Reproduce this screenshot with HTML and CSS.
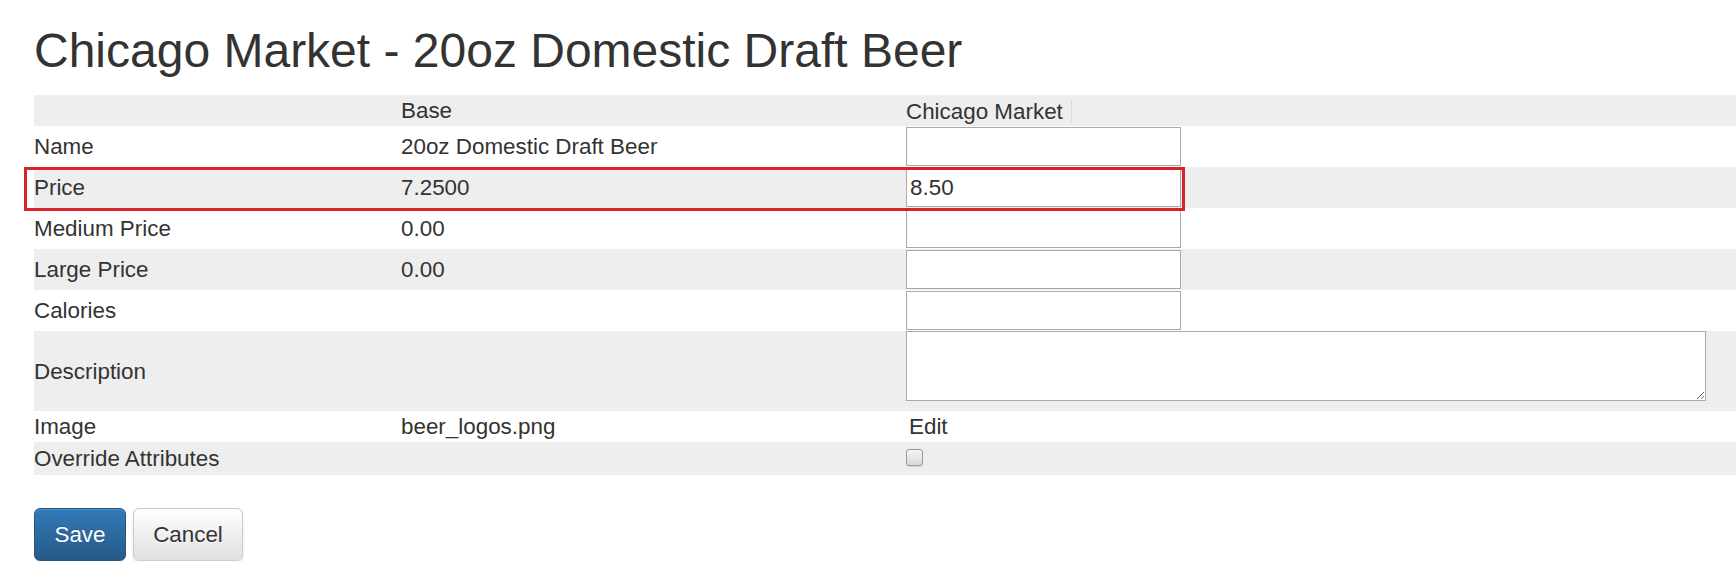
FILE: index.html
```html
<!DOCTYPE html>
<html>
<head>
<meta charset="utf-8">
<link rel="stylesheet" href="styles.css">
</head>
<body>
<div class="page">
  <h2 class="title">Chicago Market - 20oz Domestic Draft Beer</h2>
  <div class="grid-wrap">
    <table class="grid">
      <colgroup>
        <col class="c-label">
        <col class="c-base">
        <col class="c-market">
      </colgroup>
      <tr class="row head grey">
        <td></td>
        <td>Base</td>
        <td><span class="th-text">Chicago Market</span><span class="grip"></span></td>
      </tr>
      <tr class="row field">
        <td>Name</td>
        <td>20oz Domestic Draft Beer</td>
        <td><input class="inp" type="text" value=""></td>
      </tr>
      <tr class="row field grey">
        <td>Price</td>
        <td>7.2500</td>
        <td><input class="inp" type="text" value="8.50"></td>
      </tr>
      <tr class="row field">
        <td>Medium Price</td>
        <td>0.00</td>
        <td><input class="inp" type="text" value=""></td>
      </tr>
      <tr class="row field grey">
        <td>Large Price</td>
        <td>0.00</td>
        <td><input class="inp" type="text" value=""></td>
      </tr>
      <tr class="row field">
        <td>Calories</td>
        <td></td>
        <td><input class="inp" type="text" value=""></td>
      </tr>
      <tr class="row desc grey">
        <td>Description</td>
        <td></td>
        <td class="top"><textarea class="ta"></textarea></td>
      </tr>
      <tr class="row img">
        <td>Image</td>
        <td>beer_logos.png</td>
        <td><span class="edit">Edit</span></td>
      </tr>
      <tr class="row chk grey">
        <td>Override Attributes</td>
        <td></td>
        <td><input class="cb" type="checkbox"></td>
      </tr>
    </table>
    <div class="highlight"></div>
  </div>
  <div class="actions">
    <button class="btn btn-primary">Save</button>
    <button class="btn btn-default">Cancel</button>
  </div>
</div>
</body>
</html>
```
FILE: styles.css
```css
html, body {
  margin: 0;
  padding: 0;
  background: #fff;
}
body {
  font-family: "Liberation Sans", Arial, sans-serif;
  font-size: 22.4px;
  color: #333;
}
.page {
  padding-left: 34px;
}
.title {
  margin: 25px 0 18px;
  font-size: 48px;
  line-height: 52px;
  font-weight: normal;
  color: #333;
  white-space: nowrap;
}
.grid-wrap {
  position: relative;
}
.grid {
  width: 100%;
  border-collapse: collapse;
  border-spacing: 0;
  table-layout: fixed;
}
.c-label { width: 367px; }
.c-base { width: 505px; }
.grid td {
  padding: 0;
  vertical-align: middle;
  line-height: 25px;
  white-space: nowrap;
}
.grid td.top {
  vertical-align: top;
}
.grey td {
  background: #eeeeee;
}
.head td { height: 31px; }
.field td { height: 41px; }
.desc td { height: 80px; }
.img td { height: 31px; }
.chk td { height: 33px; }
.th-text {
  display: inline-block;
  vertical-align: middle;
}
.grip {
  display: inline-block;
  vertical-align: middle;
  width: 0;
  height: 23px;
  margin-left: 8px;
  border-right: 1px solid #d3dbe4;
}
.inp {
  display: block;
  box-sizing: border-box;
  width: 275px;
  height: 39px;
  margin: 0;
  padding: 0 3px;
  border: 1px solid #a9a9a9;
  background: #fff;
  font-family: "Liberation Sans", Arial, sans-serif;
  font-size: 22.4px;
  color: #333;
  outline: none;
}
.ta {
  display: block;
  box-sizing: border-box;
  width: 800px;
  height: 70px;
  margin: 0;
  padding: 2px 3px;
  border: 1px solid #a9a9a9;
  background: #fff;
  font-family: "Liberation Sans", Arial, sans-serif;
  font-size: 22.4px;
  color: #333;
}
.edit {
  display: inline-block;
  padding-left: 3px;
  color: #333;
}
.cb {
  -webkit-appearance: none;
  appearance: none;
  display: block;
  box-sizing: border-box;
  width: 17px;
  height: 17px;
  margin: -2px 0 0 0;
  border: 1px solid #999;
  border-radius: 3px;
  background: linear-gradient(to bottom, #f4f4f4, #d9d9d9);
  box-shadow: 0 1px 1px rgba(0,0,0,0.12);
}
.highlight {
  position: absolute;
  top: 72px;
  left: -10px;
  width: 1161px;
  height: 44px;
  box-sizing: border-box;
  border: 3px solid #d9222c;
  pointer-events: none;
}
.actions {
  display: flex;
  gap: 7px;
  margin-top: 33px;
}
.btn {
  box-sizing: border-box;
  height: 53px;
  padding: 0 19px;
  border-radius: 6px;
  font-family: "Liberation Sans", Arial, sans-serif;
  font-size: 22.4px;
  line-height: 51px;
  cursor: pointer;
}
.btn-primary {
  width: 92px;
  color: #fff;
  border: 1px solid #245580;
  background: linear-gradient(to bottom, #337ab7 0, #265a88 100%);
  text-shadow: 0 -1px 0 rgba(0,0,0,0.2);
  box-shadow: inset 0 1px 0 rgba(255,255,255,0.15), 0 1px 1px rgba(0,0,0,0.075);
}
.btn-default {
  width: 110px;
  color: #333;
  border: 1px solid #ccc;
  background: linear-gradient(to bottom, #fff 0, #e0e0e0 100%);
  text-shadow: 0 1px 0 #fff;
  box-shadow: inset 0 1px 0 rgba(255,255,255,0.15), 0 1px 2px rgba(0,0,0,0.15);
}
```
